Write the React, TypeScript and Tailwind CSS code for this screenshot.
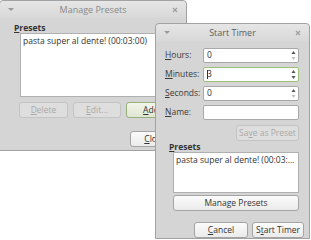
import { ReactNode } from "react";

function cn(...parts: Array<string | false | null | undefined>): string {
  return parts.filter(Boolean).join(" ");
}

function Mn({ c, rest }: { c: string; rest: string }) {
  return (
    <span>
      <span className="underline underline-offset-1">{c}</span>
      {rest}
    </span>
  );
}

function TitleBar({ title, dim }: { title: string; dim?: boolean }) {
  return (
    <div className="flex h-[17px] items-center justify-between rounded-t-[4px] bg-gradient-to-b from-[#e6e6e6] to-[#d8d8d8] px-[8px]">
      <svg width="6" height="4" viewBox="0 0 6 4">
        <path d="M0 0 L6 0 L3 3 Z" fill="#9a9a9a" />
      </svg>
      <span className={cn("whitespace-nowrap text-[9px]", dim ? "text-[#8a8a8a]" : "text-[#5e5e5e]")}>{title}</span>
      <svg width="6" height="6" viewBox="0 0 6 6">
        <path d="M1 1 L5 5 M5 1 L1 5" stroke="#a0a0a0" strokeWidth="1.2" />
      </svg>
    </div>
  );
}

function Button({
  children,
  disabled,
  tone = "normal",
  className,
}: {
  children: ReactNode;
  disabled?: boolean;
  tone?: "normal" | "default";
  className?: string;
}) {
  return (
    <div
      className={cn(
        "flex h-[16px] items-center justify-center whitespace-nowrap rounded-[3px] border text-[8.5px]",
        disabled
          ? "border-[#c4c4c4] bg-[#dedede] text-[#a9a9a9]"
          : tone === "default"
            ? "border-[#98b07a] bg-gradient-to-b from-[#f2f6ea] to-[#dfe6d2] text-[#333]"
            : "border-[#a4a4a4] bg-gradient-to-b from-[#fbfbfb] to-[#ebebeb] text-[#333]",
        className,
      )}
    >
      {children}
    </div>
  );
}

function Spin({ value, focus, downOff }: { value: string; focus?: boolean; downOff?: boolean }) {
  return (
    <div
      className={cn(
        "flex h-[15px] w-[96px] items-center justify-between rounded-[2px] border bg-white pl-[3px] pr-[2px] text-[8.5px] text-[#333]",
        focus ? "border-[#9cc277]" : "border-[#a8a8a8]",
      )}
    >
      <span className="flex items-center">
        {focus ? <span className="mr-[-1px] h-[9px] w-px bg-[#333]" /> : null}
        {value}
      </span>
      <svg width="5" height="11" viewBox="0 0 5 11">
        <path d="M0.5 4 L4.5 4 L2.5 1 Z" fill="#555" />
        <path d="M0.5 7 L4.5 7 L2.5 10 Z" fill={downOff ? "#c0c0c0" : "#555"} />
      </svg>
    </div>
  );
}

function Row({ label, children }: { label: ReactNode; children: ReactNode }) {
  return (
    <div className="flex items-center justify-between">
      <span className="whitespace-nowrap text-[8.5px] text-[#3a3a3a]">{label}</span>
      {children}
    </div>
  );
}

export default function App() {
  return (
    <div
      className="relative h-[240px] w-[311px] overflow-hidden bg-white"
      style={{ fontFamily: '"Open Sans", "DejaVu Sans", sans-serif' }}
    >
      {/* Manage Presets window */}
      <div className="absolute left-[-1px] top-0 flex h-[151px] w-[188px] flex-col rounded-t-[4px] border border-[#a2a2a2] bg-[#d5d5d5]">
        <TitleBar title="Manage Presets" dim />
        <div className="flex flex-col pl-[14px] pt-[4px]">
          <span className="text-[8.5px] font-bold leading-[11px] text-[#333]">
            <Mn c="P" rest="resets" />
          </span>
          <div className="ml-[6px] h-[64px] w-[160px] whitespace-nowrap border border-[#b0b0b0] bg-white px-[2px] pt-[1px] text-[8.5px] text-[#333]">
            pasta super al dente! (00:03:00)
          </div>
          <div className="ml-[5px] mt-[5px] flex gap-[5px]">
            <Button disabled className="w-[49px]">
              <Mn c="D" rest="elete" />
            </Button>
            <Button disabled className="w-[48px]">
              <Mn c="E" rest="dit..." />
            </Button>
            <Button tone="default" className="w-[50px]">
              <Mn c="A" rest="dd" />
            </Button>
          </div>
          <div className="ml-[116px] mt-[13px] flex">
            <Button className="w-[50px]">
              <Mn c="C" rest="lose" />
            </Button>
          </div>
        </div>
      </div>

      {/* Start Timer window */}
      <div className="absolute left-[155px] top-[23px] flex h-[216px] w-[155px] flex-col rounded-t-[4px] border border-[#a2a2a2] bg-[#d5d5d5]">
        <TitleBar title="Start Timer" />
        <div className="flex flex-col pl-[9px] pr-[10px] pt-[7px]">
          <div className="flex flex-col gap-[4px]">
            <Row label={<Mn c="H" rest="ours:" />}>
              <Spin value="0" downOff />
            </Row>
            <Row label={<Mn c="M" rest="inutes:" />}>
              <Spin value="3" focus />
            </Row>
            <Row label={<Mn c="S" rest="econds:" />}>
              <Spin value="0" downOff />
            </Row>
            <Row label={<Mn c="N" rest="ame:" />}>
              <div className="h-[15px] w-[96px] rounded-[2px] border border-[#a8a8a8] bg-white" />
            </Row>
          </div>
          <div className="mt-[5px] flex justify-end">
            <Button disabled className="w-[63px]">
              Sa<span className="underline underline-offset-1">v</span>e as Preset
            </Button>
          </div>
          <span className="ml-[4px] text-[8.5px] font-bold leading-[11px] text-[#333]">
            <Mn c="P" rest="resets" />
          </span>
          <div className="ml-[8px] h-[41px] whitespace-nowrap border border-[#b0b0b0] bg-white px-[2px] pt-[1px] text-[8.5px] text-[#333]">
            pasta super al dente! (00:03:...
          </div>
          <Button className="ml-[8px] mt-[2px]">Manage Presets</Button>
          <div className="mr-[-5px] mt-[11px] flex justify-end gap-[4px]">
            <Button className="w-[54px]">
              <Mn c="C" rest="ancel" />
            </Button>
            <Button className="w-[52px]">
              S<span className="underline underline-offset-1">t</span>art Timer
            </Button>
          </div>
        </div>
      </div>
    </div>
  );
}
